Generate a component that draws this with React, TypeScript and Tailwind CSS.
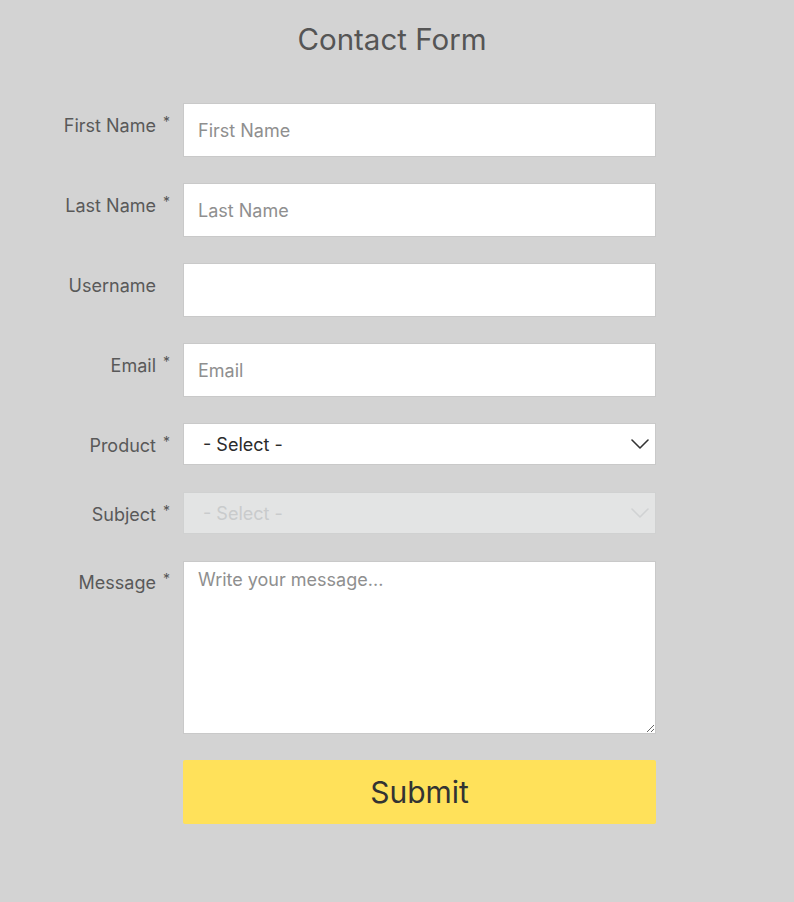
import React from "react";

const font = { fontFamily: 'Inter, "Noto Sans", sans-serif' };

function Label({ text, required, pt }: { text: string; required?: boolean; pt: string }) {
  return (
    <div className={`w-[172px] shrink-0 flex justify-end ${pt} text-[18px] leading-6 text-[#595959]`}>
      <span>{text}</span>
      <span className="w-[16px] pl-[7px] text-[14px] leading-4 text-[#555]">{required ? "*" : ""}</span>
    </div>
  );
}

function Chevron({ color }: { color: string }) {
  return (
    <svg width="18" height="10" viewBox="0 0 18 10" fill="none" className="absolute right-[6px] top-1/2 -translate-y-1/2 pointer-events-none">
      <path d="M1 1 L9 9 L17 1" stroke={color} strokeWidth="1.6" strokeLinecap="round" strokeLinejoin="round" />
    </svg>
  );
}

export default function App() {
  const inputCls =
    "w-[473px] h-[54px] bg-white border border-[#c9c9c9] px-[14px] text-[18px] text-[#333] placeholder:text-[#8f8f8f] outline-none";
  return (
    <div className="min-h-[902px] w-full bg-[#d3d3d3]" style={font}>
      <h1 className="pt-[21px] pr-[10px] text-center text-[29.5px] leading-9 text-[#555]">Contact Form</h1>
      <div className="mt-[46px] flex flex-col gap-[26px]">
        <div className="flex gap-[11px]">
          <Label text="First Name" required pt="pt-[11px]" />
          <input className={inputCls} placeholder="First Name" />
        </div>
        <div className="flex gap-[11px]">
          <Label text="Last Name" required pt="pt-[11px]" />
          <input className={inputCls} placeholder="Last Name" />
        </div>
        <div className="flex gap-[11px]">
          <Label text="Username" pt="pt-[11px]" />
          <input className={inputCls} />
        </div>
        <div className="flex gap-[11px]">
          <Label text="Email" required pt="pt-[11px]" />
          <input className={inputCls} placeholder="Email" />
        </div>
        <div className="flex gap-[11px]">
          <Label text="Product" required pt="pt-[11px]" />
          <div className="relative w-[473px] h-[42px] bg-white border border-[#c9c9c9] flex items-center pl-[19px] text-[18px] text-[#2b2b2b]">
            - Select -
            <Chevron color="#333" />
          </div>
        </div>
        <div className="flex gap-[11px] mt-[1px]">
          <Label text="Subject" required pt="pt-[11px]" />
          <div className="relative w-[473px] h-[42px] bg-[#e3e4e4] border border-[#d0d1d1] flex items-center pl-[19px] text-[18px] text-[#c9cbcc]">
            - Select -
            <Chevron color="#d0d2d3" />
          </div>
        </div>
        <div className="flex gap-[11px] mt-[1px]">
          <Label text="Message" required pt="pt-[10px]" />
          <textarea
            className="w-[473px] h-[173px] bg-white border border-[#c9c9c9] px-[14px] py-[6px] text-[18px] leading-6 text-[#333] placeholder:text-[#8f8f8f] outline-none block"
            placeholder="Write your message..."
          />
        </div>
        <div className="flex gap-[11px]">
          <div className="w-[172px] shrink-0" />
          <button className="w-[473px] h-[64px] bg-[#ffe15a] rounded-[2px] text-[30px] text-[#333]">Submit</button>
        </div>
      </div>
    </div>
  );
}
